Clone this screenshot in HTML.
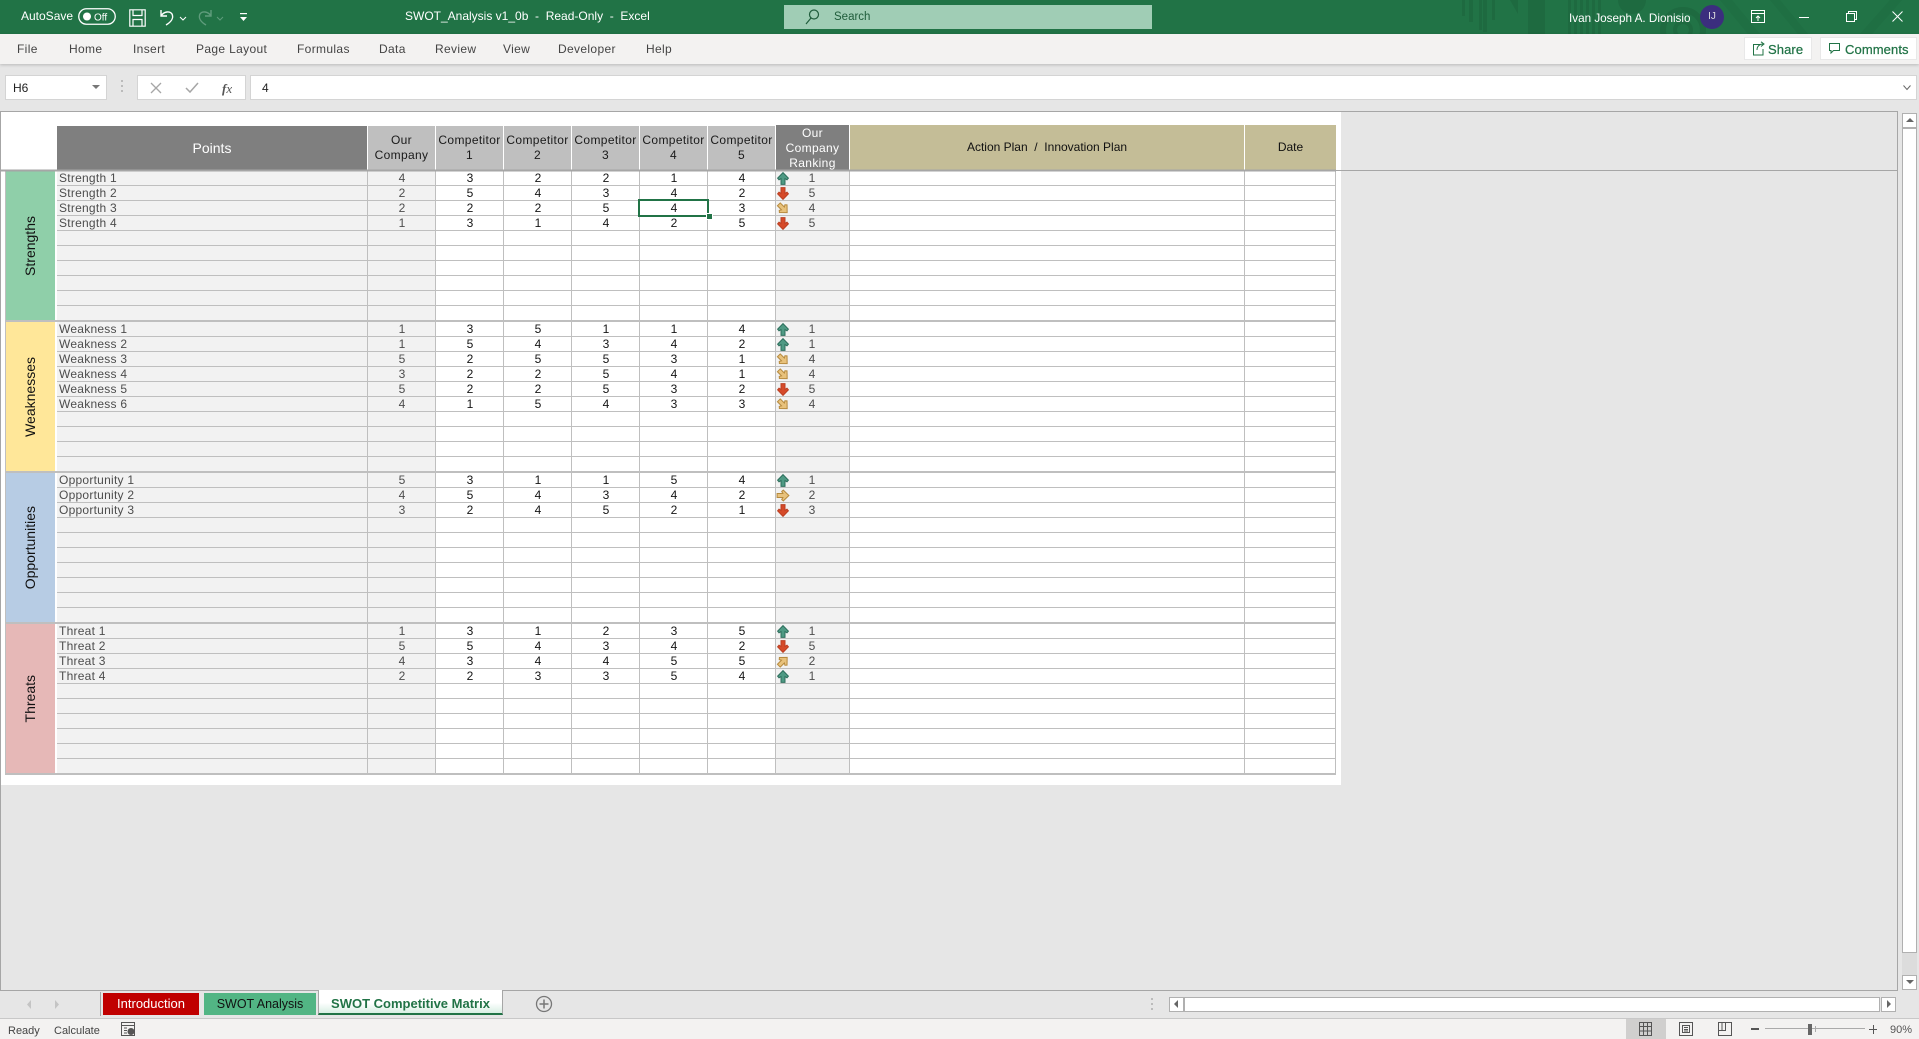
<!DOCTYPE html>
<html lang="en"><head><meta charset="utf-8"><title>SWOT_Analysis v1_0b - Read-Only - Excel</title>
<style>
html,body{margin:0;padding:0}
body{width:1919px;height:1039px;overflow:hidden;position:relative;background:#e6e6e6;font:12px/15px "Liberation Sans",sans-serif;color:#222}
.a,.t,.r,.r>*{position:absolute}
.t{white-space:pre}
.r{left:0;width:1919px;height:14px;line-height:14px}
.r>*{top:0;text-align:center;height:14px;color:#151515}
.r>span:nth-child(1){left:59px;text-align:left;color:#4d4d4d;letter-spacing:.25px}
.r>span:nth-child(2){left:368px;width:68px;color:#4d4d4d}
.r>span:nth-child(3){left:436px;width:68px}
.r>span:nth-child(4){left:504px;width:68px}
.r>span:nth-child(5){left:572px;width:68px}
.r>span:nth-child(6){left:640px;width:68px}
.r>span:nth-child(7){left:708px;width:68px}
.r>svg{left:777px;top:1px;width:12px;height:13px;overflow:visible}
.r>span:nth-child(9){left:802px;width:20px;color:#4d4d4d}
.h{position:absolute;top:126px;height:44px;text-align:center;background:#bfbfbf;color:#1a1a1a;letter-spacing:.35px;white-space:nowrap}
.s{position:absolute;left:6px;width:49px;height:150px;display:flex;align-items:center;justify-content:center}
.s span{writing-mode:vertical-rl;transform:rotate(180deg);font-size:14px;color:#111}
.rb{color:#444;top:42px;letter-spacing:.35px}
.gb{position:absolute;background:#fff;border:1px solid #d4d4d4;box-sizing:border-box}
</style></head><body>
<svg width="0" height="0" style="position:absolute"><defs>
<path id="ar" d="M6 .6 11.4 6.2 10 7.8 8 6.6V12.4H4V6.6L2 7.8.6 6.2Z"/>
</defs></svg>

<!-- title bar -->
<div class="a" style="left:0;top:0;width:1919px;height:34px;background:#217346"></div>
<svg class="a" style="left:1440px;top:0" width="479" height="34" fill="#1e6a40">
<rect x="22" width="3" height="16"/><rect x="29" width="4" height="22"/><rect x="39" width="3" height="30"/><rect x="43" width="4" height="32"/><rect x="52" width="3" height="20"/>
<path d="M70 0H78V14Z"/><rect x="88" width="17" height="34"/><rect x="128" width="3" height="34"/><rect x="134" width="3" height="34"/><rect x="140" width="3" height="34"/><rect x="146" width="3" height="34"/><rect x="152" width="3" height="34"/><rect x="158" width="3" height="34"/>
<circle cx="192" cy="0" r="14"/><circle cx="243" cy="30" r="20" fill="none" stroke="#1e6a40" stroke-width="6"/><circle cx="243" cy="30" r="8" fill="none" stroke="#1e6a40" stroke-width="4"/>
<path fill="#1f6f43" d="M280 0H292L320 34H308ZM330 0H340L368 34H358ZM420 34 450 0H462L432 34Z"/>
</svg>
<div class="t" style="left:21px;top:9px;color:#fff">AutoSave</div>
<svg class="a" style="left:78px;top:8px" width="38" height="17"><rect x=".75" y=".75" width="36.5" height="15.5" rx="7.7" fill="none" stroke="#fff" stroke-width="1.3"/><circle cx="9" cy="8.5" r="4" fill="#fff"/><text x="16" y="12.5" font-family="Liberation Sans" font-size="10" fill="#fff">Off</text></svg>
<svg class="a" style="left:129px;top:9px" width="17" height="18" fill="none" stroke="#fff" stroke-width="1.2"><path d="M.8.8H16.2V17.2H.8ZM4 .8V6.5H13V.8M4 17.2V10.5H13V17.2"/></svg>
<svg class="a" style="left:158px;top:8px" width="30" height="20" fill="none" stroke="#fff" stroke-width="1.4"><path d="M3 2V8H9M3 8C6 3 12 3 14 6 16 10 13 14 8 17"/><path d="M22 9 25 12 28 9" stroke-width="1"/></svg>
<svg class="a" style="left:197px;top:8px" width="30" height="20" fill="none" stroke="#5f9c7c" stroke-width="1.4"><path d="M14 2V8H8M14 8C11 3 5 3 3 6 1 10 4 14 9 17"/><path d="M20 9 23 12 26 9" stroke-width="1"/></svg>
<svg class="a" style="left:239px;top:12px" width="10" height="12" fill="#fff"><rect x="1" y="1" width="7" height="1.2"/><path d="M1 5H8L4.500 9Z"/></svg>
<div class="t" style="left:405px;top:9px;color:#fff">SWOT_Analysis v1_0b  -  Read-Only  -  Excel</div>
<div class="a" style="left:784px;top:5px;width:368px;height:24px;background:#a0cdb5"></div>
<svg class="a" style="left:804px;top:8px" width="16" height="18" fill="none" stroke="#1f5c3b" stroke-width="1.2"><circle cx="10" cy="6.500" r="4.500"/><path d="M7 10 2 16"/></svg>
<div class="t" style="left:834px;top:10px;color:#1f5c3b;font-size:11.500px">Search</div>
<div class="t" style="left:1569px;top:11px;color:#fff;font-size:11.700px">Ivan Joseph A. Dionisio</div>
<div class="a" style="left:1700px;top:5px;width:24px;height:24px;border-radius:50%;background:#3b2e7e;color:#ddd;text-align:center;line-height:24px;font-size:10px">IJ</div>
<svg class="a" style="left:1751px;top:10px" width="14" height="13" fill="none" stroke="#fff" stroke-width="1"><path d="M.5 .5H13.500V12.500H.5ZM.5 3.500H13.500M7 11V6M5 8 7 6 9 8"/></svg>
<div class="a" style="left:1799px;top:17px;width:10px;height:1px;background:#fff"></div>
<svg class="a" style="left:1846px;top:11px" width="11" height="11" fill="none" stroke="#fff" stroke-width="1"><path d="M.5 2.500H8.500V10.500H.5ZM2.500 2.500V.5H10.500V8.500H8.500"/></svg>
<svg class="a" style="left:1892px;top:11px" width="11" height="11" fill="none" stroke="#fff" stroke-width="1"><path d="M.5 .5 10.500 10.500M10.500 .5 .5 10.500"/></svg>

<!-- ribbon -->
<div class="a" style="left:0;top:34px;width:1919px;height:30px;background:#f3f2f1;box-shadow:0 1px 3px rgba(0,0,0,.2)"></div>
<div class="t rb" style="left:17px">File</div><div class="t rb" style="left:69px">Home</div><div class="t rb" style="left:133px">Insert</div><div class="t rb" style="left:196px">Page Layout</div><div class="t rb" style="left:297px">Formulas</div><div class="t rb" style="left:379px">Data</div><div class="t rb" style="left:435px">Review</div><div class="t rb" style="left:503px">View</div><div class="t rb" style="left:558px">Developer</div><div class="t rb" style="left:646px">Help</div>
<div class="gb" style="left:1744px;top:37px;width:68px;height:23px;border-color:#e8e8e8"></div>
<div class="gb" style="left:1820px;top:37px;width:97px;height:23px;border-color:#e8e8e8"></div>
<svg class="a" style="left:1752px;top:41px" width="13" height="15" fill="none" stroke="#217346" stroke-width="1"><path d="M8 3.500H1.500V14H11V8M5 9C5 5 8 3 11 3M9 .8 12 3 9 5.500"/></svg>
<div class="t" style="left:1768px;top:42px;color:#217346;font-size:13px;-webkit-text-stroke:.25px #217346;letter-spacing:.1px">Share</div>
<svg class="a" style="left:1828px;top:42px" width="13" height="14" fill="none" stroke="#217346" stroke-width="1"><path d="M1.500 1.500H11.500V8.500H5.500L3 11V8.500H1.500Z"/></svg>
<div class="t" style="left:1845px;top:42px;color:#217346;font-size:13px;-webkit-text-stroke:.25px #217346;letter-spacing:.1px">Comments</div>

<!-- formula bar -->
<div class="gb" style="left:5px;top:75px;width:102px;height:25px"></div>
<div class="t" style="left:13px;top:81px">H6</div>
<svg class="a" style="left:92px;top:85px" width="9" height="5" fill="#777"><path d="M0 0H8L4 4Z"/></svg>
<svg class="a" style="left:121px;top:80px" width="3" height="15" fill="#bbb"><rect width="2" height="2"/><rect y="5" width="2" height="2"/><rect y="10" width="2" height="2"/></svg>
<div class="gb" style="left:137px;top:75px;width:109px;height:25px"></div>
<svg class="a" style="left:150px;top:82px" width="12" height="12" fill="none" stroke="#a6a6a6" stroke-width="1.300"><path d="M1 1 11 11M11 1 1 11"/></svg>
<svg class="a" style="left:185px;top:82px" width="14" height="12" fill="none" stroke="#a6a6a6" stroke-width="1.500"><path d="M1 6 5 10 13 1"/></svg>
<div class="t" style="left:222px;top:81px;font:italic 13px/15px 'Liberation Serif',serif;color:#555"><b>f</b>x</div>
<div class="gb" style="left:250px;top:75px;width:1667px;height:25px"></div>
<div class="t" style="left:262px;top:81px">4</div>
<svg class="a" style="left:1903px;top:85px" width="8" height="6" fill="none" stroke="#666" stroke-width="1"><path d="M.5 .5 4 4.500 7.500 .5"/></svg>

<!-- sheet -->
<div class="a" style="left:0;top:111px;width:1898px;height:1px;background:#a6a6a6"></div>
<div class="a" style="left:1897px;top:111px;width:1px;height:880px;background:#a6a6a6"></div>
<div class="a" style="left:0;top:111px;width:1px;height:880px;background:#a6a6a6"></div>
<div class="a" style="left:0;top:990px;width:1898px;height:1px;background:#a6a6a6"></div>
<div class="a" style="left:1px;top:112px;width:1340px;height:673px;background:#fff"></div>

<!-- gray filled columns -->
<div class="a" style="left:57px;top:171px;width:310px;height:603px;background:#f2f2f2"></div>
<div class="a" style="left:367px;top:171px;width:68px;height:603px;background:#f2f2f2"></div>
<div class="a" style="left:775px;top:171px;width:74px;height:603px;background:#f2f2f2"></div>

<!-- section labels -->
<div class="a" style="left:5px;top:171px;width:1px;height:603px;background:#bfbfbf"></div>
<div class="s" style="top:171px;background:#8fcfa9"><span>Strengths</span></div>
<div class="s" style="top:322px;background:#ffe799"><span>Weaknesses</span></div>
<div class="s" style="top:473px;background:#b7cce4"><span>Opportunities</span></div>
<div class="s" style="top:624px;background:#e6b8b7"><span>Threats</span></div>

<!-- header -->
<div class="h" style="left:57px;width:310px;background:#7f7f7f;color:#fff;font-size:14px;line-height:44px;letter-spacing:0">Points</div>
<div class="h" style="left:368px;width:67px;padding-top:7px;height:37px">Our<br>Company</div>
<div class="h" style="left:436px;width:67px;padding-top:7px;height:37px">Competitor<br>1</div>
<div class="h" style="left:504px;width:67px;padding-top:7px;height:37px">Competitor<br>2</div>
<div class="h" style="left:572px;width:67px;padding-top:7px;height:37px">Competitor<br>3</div>
<div class="h" style="left:640px;width:67px;padding-top:7px;height:37px">Competitor<br>4</div>
<div class="h" style="left:708px;width:67px;padding-top:7px;height:37px">Competitor<br>5</div>
<div class="h" style="left:776px;width:73px;background:#7f7f7f;color:#fff;height:44px;padding-top:1px;top:125px">Our<br>Company<br>Ranking</div>
<div class="h" style="left:850px;width:394px;top:125px;height:45px;background:#c4bd97;color:#111;line-height:45px;white-space:pre;letter-spacing:0">Action Plan  /  Innovation Plan</div>
<div class="h" style="left:1245px;width:91px;top:125px;height:45px;background:#c4bd97;color:#111;line-height:45px;letter-spacing:0">Date</div>

<!-- grid lines -->
<svg class="a" style="left:0;top:0" width="1919" height="1039" shape-rendering="crispEdges" fill="none">
<path stroke="#bfbfbf" d="M367.500 171V775M435.500 171V775M503.500 171V775M571.500 171V775M639.500 171V775M707.500 171V775M775.500 171V775M849.500 171V775M1244.500 171V775M1335.500 171V775
M57 185.500H1336M57 200.500H1336M57 215.500H1336M57 230.500H1336M57 245.500H1336M57 260.500H1336M57 275.500H1336M57 290.500H1336M57 305.500H1336
M57 336.500H1336M57 351.500H1336M57 366.500H1336M57 381.500H1336M57 396.500H1336M57 411.500H1336M57 426.500H1336M57 441.500H1336M57 456.500H1336
M57 487.500H1336M57 502.500H1336M57 517.500H1336M57 532.500H1336M57 547.500H1336M57 562.500H1336M57 577.500H1336M57 592.500H1336M57 607.500H1336
M57 638.500H1336M57 653.500H1336M57 668.500H1336M57 683.500H1336M57 698.500H1336M57 713.500H1336M57 728.500H1336M57 743.500H1336M57 758.500H1336"/>
<path stroke="#bfbfbf" stroke-width="2" d="M5 321H1336M5 472H1336M5 623H1336M5 774H1336"/>
<path stroke="#a6a6a6" stroke-width="2" d="M0 170.500H1336"/>
<path stroke="#a6a6a6" d="M1336 170.500H1897"/>
</svg>

<!-- rows -->
<div class="r" style="top:171px"><span>Strength 1</span><span>4</span><span>3</span><span>2</span><span>2</span><span>1</span><span>4</span><svg viewBox="0 0 12 13" fill="#4f9a84" stroke="#2d6e5c"><use href="#ar"/></svg><span>1</span></div>
<div class="r" style="top:186px"><span>Strength 2</span><span>2</span><span>5</span><span>4</span><span>3</span><span>4</span><span>2</span><svg viewBox="0 0 12 13" fill="#d64a29" stroke="#bb3f22"><use href="#ar" transform="rotate(180 6 6.500)"/></svg><span>5</span></div>
<div class="r" style="top:201px"><span>Strength 3</span><span>2</span><span>2</span><span>2</span><span>5</span><span>4</span><span>3</span><svg viewBox="0 0 12 13" fill="#e8c27c" stroke="#b68a3e"><use href="#ar" transform="rotate(135 6 6.500)"/></svg><span>4</span></div>
<div class="r" style="top:216px"><span>Strength 4</span><span>1</span><span>3</span><span>1</span><span>4</span><span>2</span><span>5</span><svg viewBox="0 0 12 13" fill="#d64a29" stroke="#bb3f22"><use href="#ar" transform="rotate(180 6 6.500)"/></svg><span>5</span></div>

<div class="r" style="top:322px"><span>Weakness 1</span><span>1</span><span>3</span><span>5</span><span>1</span><span>1</span><span>4</span><svg viewBox="0 0 12 13" fill="#4f9a84" stroke="#2d6e5c"><use href="#ar"/></svg><span>1</span></div>
<div class="r" style="top:337px"><span>Weakness 2</span><span>1</span><span>5</span><span>4</span><span>3</span><span>4</span><span>2</span><svg viewBox="0 0 12 13" fill="#4f9a84" stroke="#2d6e5c"><use href="#ar"/></svg><span>1</span></div>
<div class="r" style="top:352px"><span>Weakness 3</span><span>5</span><span>2</span><span>5</span><span>5</span><span>3</span><span>1</span><svg viewBox="0 0 12 13" fill="#e8c27c" stroke="#b68a3e"><use href="#ar" transform="rotate(135 6 6.500)"/></svg><span>4</span></div>
<div class="r" style="top:367px"><span>Weakness 4</span><span>3</span><span>2</span><span>2</span><span>5</span><span>4</span><span>1</span><svg viewBox="0 0 12 13" fill="#e8c27c" stroke="#b68a3e"><use href="#ar" transform="rotate(135 6 6.500)"/></svg><span>4</span></div>
<div class="r" style="top:382px"><span>Weakness 5</span><span>5</span><span>2</span><span>2</span><span>5</span><span>3</span><span>2</span><svg viewBox="0 0 12 13" fill="#d64a29" stroke="#bb3f22"><use href="#ar" transform="rotate(180 6 6.500)"/></svg><span>5</span></div>
<div class="r" style="top:397px"><span>Weakness 6</span><span>4</span><span>1</span><span>5</span><span>4</span><span>3</span><span>3</span><svg viewBox="0 0 12 13" fill="#e8c27c" stroke="#b68a3e"><use href="#ar" transform="rotate(135 6 6.500)"/></svg><span>4</span></div>

<div class="r" style="top:473px"><span>Opportunity 1</span><span>5</span><span>3</span><span>1</span><span>1</span><span>5</span><span>4</span><svg viewBox="0 0 12 13" fill="#4f9a84" stroke="#2d6e5c"><use href="#ar"/></svg><span>1</span></div>
<div class="r" style="top:488px"><span>Opportunity 2</span><span>4</span><span>5</span><span>4</span><span>3</span><span>4</span><span>2</span><svg viewBox="0 0 12 13" fill="#e8c27c" stroke="#b68a3e"><use href="#ar" transform="rotate(90 6 6.500)"/></svg><span>2</span></div>
<div class="r" style="top:503px"><span>Opportunity 3</span><span>3</span><span>2</span><span>4</span><span>5</span><span>2</span><span>1</span><svg viewBox="0 0 12 13" fill="#d64a29" stroke="#bb3f22"><use href="#ar" transform="rotate(180 6 6.500)"/></svg><span>3</span></div>

<div class="r" style="top:624px"><span>Threat 1</span><span>1</span><span>3</span><span>1</span><span>2</span><span>3</span><span>5</span><svg viewBox="0 0 12 13" fill="#4f9a84" stroke="#2d6e5c"><use href="#ar"/></svg><span>1</span></div>
<div class="r" style="top:639px"><span>Threat 2</span><span>5</span><span>5</span><span>4</span><span>3</span><span>4</span><span>2</span><svg viewBox="0 0 12 13" fill="#d64a29" stroke="#bb3f22"><use href="#ar" transform="rotate(180 6 6.500)"/></svg><span>5</span></div>
<div class="r" style="top:654px"><span>Threat 3</span><span>4</span><span>3</span><span>4</span><span>4</span><span>5</span><span>5</span><svg viewBox="0 0 12 13" fill="#e8c27c" stroke="#b68a3e"><use href="#ar" transform="rotate(45 6 6.500)"/></svg><span>2</span></div>
<div class="r" style="top:669px"><span>Threat 4</span><span>2</span><span>2</span><span>3</span><span>3</span><span>5</span><span>4</span><svg viewBox="0 0 12 13" fill="#4f9a84" stroke="#2d6e5c"><use href="#ar"/></svg><span>1</span></div>

<!-- selection -->
<div class="a" style="left:638px;top:199px;width:71px;height:18px;box-sizing:border-box;border:2px solid #217346"></div>
<div class="a" style="left:707px;top:214px;width:5px;height:5px;background:#217346;border:1px solid #fff;box-sizing:content-box;margin:-1px 0 0 -1px"></div>

<!-- vertical scrollbar -->
<div class="a" style="left:1902px;top:113px;width:15px;height:877px;background:#dcdcdc"></div>
<div class="gb" style="left:1902px;top:113px;width:15px;height:15px;border-color:#b0b0b0"></div>
<svg class="a" style="left:1906px;top:118px" width="8" height="5" fill="#666"><path d="M4 0 8 4H0Z"/></svg>
<div class="gb" style="left:1902px;top:128px;width:15px;height:825px;border-color:#b0b0b0"></div>
<div class="gb" style="left:1902px;top:975px;width:15px;height:15px;border-color:#b0b0b0"></div>
<svg class="a" style="left:1906px;top:980px" width="8" height="5" fill="#666"><path d="M0 0H8L4 4Z"/></svg>

<!-- tabs bar -->
<svg class="a" style="left:25px;top:999px" width="40" height="11" fill="#c4c4c4"><path d="M6 1V10L2 5.500Z"/><path d="M30 1V10L34 5.500Z"/></svg>
<div class="a" style="left:100px;top:992px;width:1px;height:24px;background:#a6a6a6"></div>
<div class="a" style="left:103px;top:993px;width:96px;height:22px;background:#c00000;color:#fff;text-align:center;font-size:13px;line-height:22px">Introduction</div>
<div class="a" style="left:204px;top:993px;width:112px;height:22px;background:#52b584;color:#111;text-align:center;font-size:12.500px;line-height:22px">SWOT Analysis</div>
<div class="a" style="left:318px;top:990px;width:185px;height:25px;box-sizing:border-box;border:1px solid #a6a6a6;border-top:0;border-bottom:2px solid #217346;background:linear-gradient(#fff 55%,#d8efe3);color:#217346;font-weight:bold;font-size:13px;line-height:28px;text-align:center">SWOT Competitive Matrix</div>
<svg class="a" style="left:535px;top:995px" width="18" height="18" fill="none" stroke="#777" stroke-width="1.300"><circle cx="9" cy="9" r="7.500"/><path d="M9 4.500V13.500M4.500 9H13.500" stroke-width="1.500"/></svg>
<svg class="a" style="left:1151px;top:998px" width="3" height="14" fill="#bbb"><rect width="2" height="2"/><rect y="5" width="2" height="2"/><rect y="10" width="2" height="2"/></svg>
<div class="gb" style="left:1169px;top:997px;width:15px;height:15px;border-color:#b0b0b0"></div>
<svg class="a" style="left:1174px;top:1000px" width="5" height="9" fill="#666"><path d="M4 0V8L0 4Z"/></svg>
<div class="gb" style="left:1184px;top:997px;width:696px;height:15px;border-color:#b0b0b0"></div>
<div class="gb" style="left:1881px;top:997px;width:15px;height:15px;border-color:#b0b0b0"></div>
<svg class="a" style="left:1887px;top:1000px" width="5" height="9" fill="#666"><path d="M0 0V8L4 4Z"/></svg>

<!-- status bar -->
<div class="a" style="left:0;top:1018px;width:1919px;height:1px;background:#c8c8c8"></div>
<div class="a" style="left:0;top:1019px;width:1919px;height:20px;background:#f3f2f1"></div>
<div class="t" style="left:8px;top:1024px;font-size:11px;color:#444">Ready</div>
<div class="t" style="left:54px;top:1024px;font-size:11px;color:#444">Calculate</div>
<svg class="a" style="left:121px;top:1022px" width="15" height="15" fill="none" stroke="#555" stroke-width="1"><path d="M.5 .5H13.500V13.500H.5ZM.5 3.500H13.500M3 6H6M3 8.500H6M3 11H6"/><circle cx="10" cy="9.500" r="3" fill="#555"/></svg>
<div class="a" style="left:1626px;top:1019px;width:40px;height:20px;background:#d0cfce"></div>
<svg class="a" style="left:1639px;top:1022px" width="13" height="14" fill="none" stroke="#555" stroke-width="1"><path d="M.5 .5H12.500V13.500H.5ZM.5 4.500H12.500M.5 9H12.500M4.500 .5V13.500M8.500 .5V13.500"/></svg>
<svg class="a" style="left:1679px;top:1022px" width="14" height="14" fill="none" stroke="#555" stroke-width="1"><path d="M.5 .5H13.500V13.500H.5ZM3.500 3.500H10.500V10.500H3.500ZM5 5.500H9M5 7.500H9M5 9H9"/></svg>
<svg class="a" style="left:1718px;top:1022px" width="14" height="14" fill="none" stroke="#555" stroke-width="1"><path d="M.5 .5H13.500V13.500H.5ZM.5 8.500H7.500V.5M4 .5V8.500"/></svg>
<div class="a" style="left:1751px;top:1028px;width:8px;height:2px;background:#555"></div>
<div class="a" style="left:1765px;top:1028px;width:100px;height:1px;background:#aaa"></div>
<div class="a" style="left:1815px;top:1026px;width:1px;height:6px;background:#aaa"></div>
<div class="a" style="left:1808px;top:1024px;width:4px;height:11px;background:#666"></div>
<div class="a" style="left:1869px;top:1029px;width:8px;height:1px;background:#555"></div>
<div class="a" style="left:1873px;top:1025px;width:1px;height:9px;background:#555"></div>
<div class="t" style="left:1890px;top:1023px;font-size:11px;color:#555">90%</div>
</body></html>
